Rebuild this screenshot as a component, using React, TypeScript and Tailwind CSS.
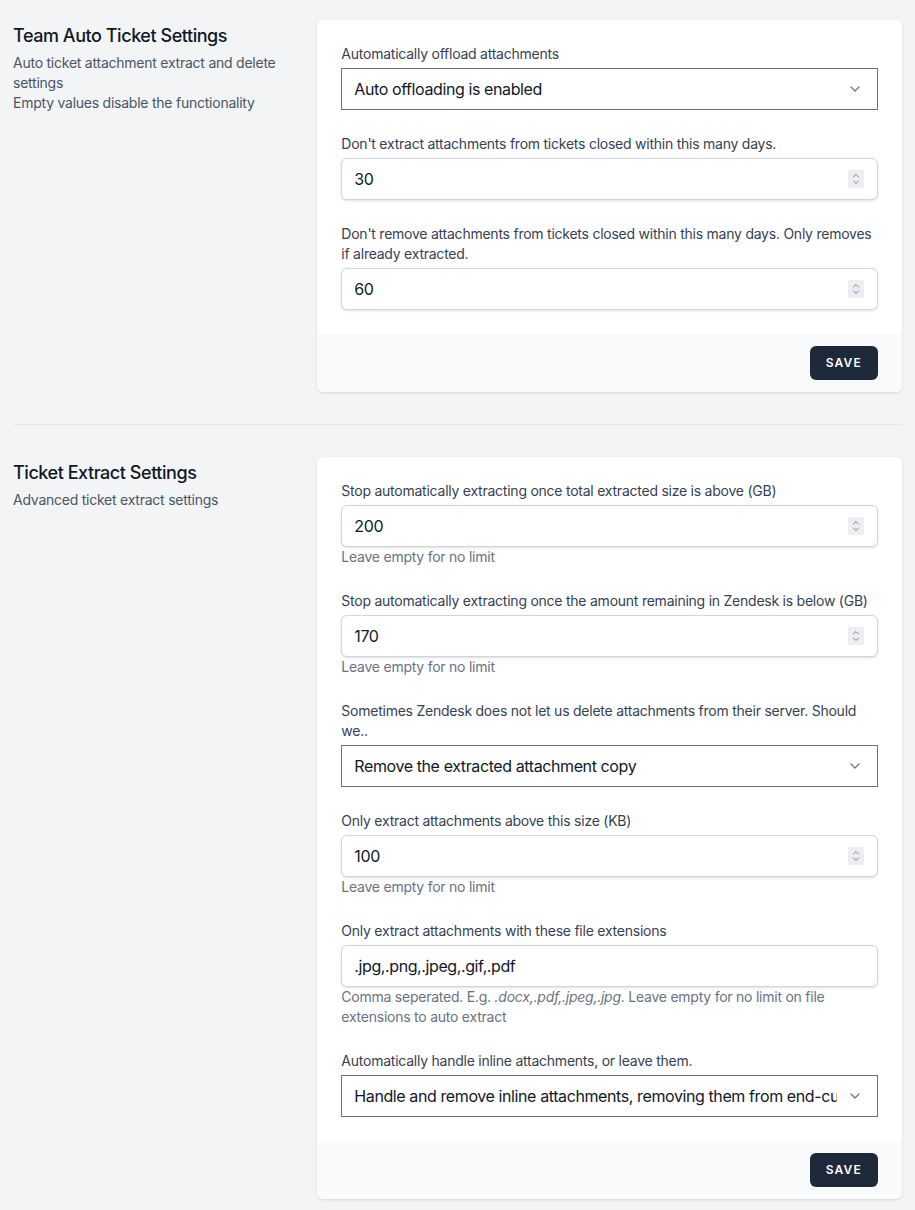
import React from "react";

const font = { fontFamily: "Inter, 'Noto Sans', sans-serif" };

function Chevron() {
  return (
    <svg width="16" height="16" viewBox="0 0 20 20" fill="none" className="absolute right-[14px] top-[12px]">
      <path d="M5 7.5l5 5 5-5" stroke="#6b7280" strokeWidth="1.5" strokeLinecap="round" strokeLinejoin="round" />
    </svg>
  );
}

function Spinner() {
  return (
    <svg width="16" height="18" viewBox="0 0 16 18" className="absolute right-[13px] top-[11px]">
      <rect x="0" y="0" width="16" height="18" rx="1" fill="#eceef1" />
      <path d="M5.5 7l2.5-2.5 2.5 2.5" stroke="#7b818c" strokeWidth="1" fill="none" strokeLinecap="round" strokeLinejoin="round" />
      <path d="M5.5 11l2.5 2.5 2.5-2.5" stroke="#7b818c" strokeWidth="1" fill="none" strokeLinecap="round" strokeLinejoin="round" />
    </svg>
  );
}

function Label({ children }: { children: React.ReactNode }) {
  return <label className="block text-sm leading-5 text-gray-700">{children}</label>;
}

function Hint({ children }: { children: React.ReactNode }) {
  return <p className="text-sm leading-5 text-gray-500">{children}</p>;
}

function SelectBox({ value }: { value: string }) {
  return (
    <div className="relative mt-1 h-[42px] border border-gray-500 bg-white pl-3 pr-10 text-base leading-[40px] tracking-[-0.025em] text-gray-900">
      <div className="overflow-hidden whitespace-nowrap">{value}</div>
      <Chevron />
    </div>
  );
}

function NumberBox({ value, spinner = true }: { value: string; spinner?: boolean }) {
  return (
    <div className="relative mt-1 h-[42px] rounded-md border border-gray-300 bg-white pl-3 pr-10 text-base leading-[40px] tracking-[-0.025em] text-gray-900 shadow-sm">
      {value}
      {spinner && <Spinner />}
    </div>
  );
}

function Card({ children }: { children: React.ReactNode }) {
  return (
    <div className="col-span-2 overflow-hidden rounded-md bg-white shadow">
      <div className="flex flex-col gap-6 p-6">{children}</div>
      <div className="flex justify-end bg-gray-50 px-6 py-3">
        <button className="h-[34px] rounded-md bg-gray-800 px-4 text-xs font-semibold uppercase tracking-widest text-white">
          Save
        </button>
      </div>
    </div>
  );
}

function Side({ title, children }: { title: string; children: React.ReactNode }) {
  return (
    <div>
      <h3 className="pt-[2px] text-lg font-medium leading-7 tracking-[-0.025em] text-gray-900">{title}</h3>
      <div className="mt-[3px] text-sm leading-5 text-gray-600">{children}</div>
    </div>
  );
}

export default function App() {
  return (
    <div className="min-h-[1210px] bg-gray-100 px-[13px] pt-5 pb-3 tracking-[-0.015em]" style={font}>
      <div className="grid grid-cols-3 gap-6">
        <Side title="Team Auto Ticket Settings">
          <p>Auto ticket attachment extract and delete settings</p>
          <p>Empty values disable the functionality</p>
        </Side>
        <Card>
          <div>
            <Label>Automatically offload attachments</Label>
            <SelectBox value="Auto offloading is enabled" />
          </div>
          <div>
            <Label>Don't extract attachments from tickets closed within this many days.</Label>
            <NumberBox value="30" />
          </div>
          <div>
            <Label>
              Don't remove attachments from tickets closed within this many days. Only removes if already extracted.
            </Label>
            <NumberBox value="60" />
          </div>
        </Card>
      </div>

      <div className="py-8">
        <div className="border-t border-gray-200" />
      </div>

      <div className="grid grid-cols-3 gap-6">
        <Side title="Ticket Extract Settings">
          <p>Advanced ticket extract settings</p>
        </Side>
        <Card>
          <div>
            <Label>Stop automatically extracting once total extracted size is above (GB)</Label>
            <NumberBox value="200" />
            <Hint>Leave empty for no limit</Hint>
          </div>
          <div>
            <Label>Stop automatically extracting once the amount remaining in Zendesk is below (GB)</Label>
            <NumberBox value="170" />
            <Hint>Leave empty for no limit</Hint>
          </div>
          <div>
            <Label>Sometimes Zendesk does not let us delete attachments from their server. Should we..</Label>
            <SelectBox value="Remove the extracted attachment copy" />
          </div>
          <div>
            <Label>Only extract attachments above this size (KB)</Label>
            <NumberBox value="100" />
            <Hint>Leave empty for no limit</Hint>
          </div>
          <div>
            <Label>Only extract attachments with these file extensions</Label>
            <NumberBox value=".jpg,.png,.jpeg,.gif,.pdf" spinner={false} />
            <Hint>
              Comma seperated. E.g. <i>.docx,.pdf,.jpeg,.jpg</i>. Leave empty for no limit on file extensions to auto
              extract
            </Hint>
          </div>
          <div>
            <Label>Automatically handle inline attachments, or leave them.</Label>
            <SelectBox value="Handle and remove inline attachments, removing them from end-customer view" />
          </div>
        </Card>
      </div>
    </div>
  );
}
